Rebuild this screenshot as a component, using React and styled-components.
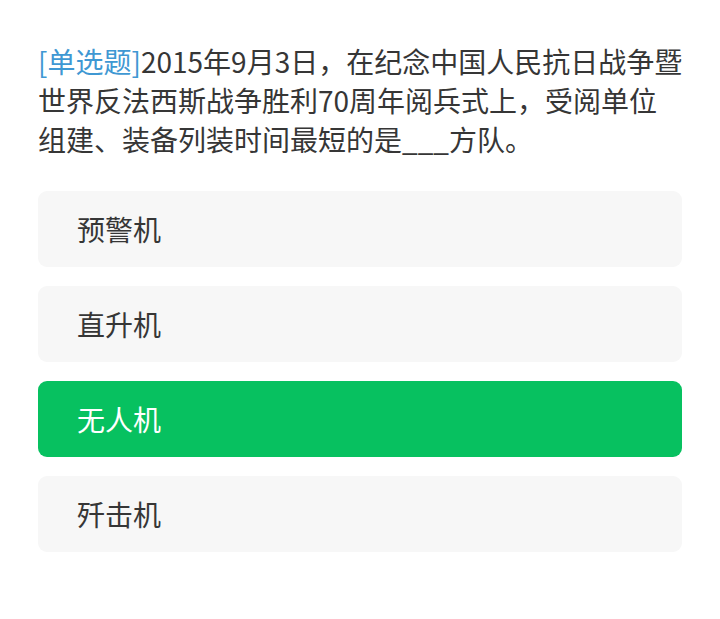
import React from 'react';
import styled, { createGlobalStyle } from 'styled-components';

const GlobalStyle = createGlobalStyle`
  html, body {
    margin: 0;
    padding: 0;
    background: #ffffff;
  }
  body {
    font-family: "Noto Sans CJK SC", "Noto Sans", sans-serif;
  }
`;

const Page = styled.div`
  padding: 42px 38px 40px;
`;

const Question = styled.div`
  font-size: 28px;
  line-height: 39px;
  color: #363636;
  margin-right: -12px;
`;

const Tag = styled.span`
  color: #3f98d3;
`;

const Options = styled.div`
  display: flex;
  flex-direction: column;
  gap: 19px;
  margin-top: 32px;
`;

const Option = styled.div`
  height: 76px;
  display: flex;
  align-items: center;
  padding: 0 39px;
  border-radius: 9px;
  font-size: 28px;
  background: ${(p) => (p.$selected ? '#07c160' : '#f7f7f7')};
  color: ${(p) => (p.$selected ? '#ffffff' : '#363636')};
`;

const options = ['预警机', '直升机', '无人机', '歼击机'];

const App = () => {
  return (
    <Page>
      <GlobalStyle />
      <Question>
        <Tag>[单选题]</Tag>2015年9月3日，在纪念中国人民抗日战争暨
        <br />
        世界反法西斯战争胜利70周年阅兵式上，受阅单位
        <br />
        组建、装备列装时间最短的是___方队。
      </Question>
      <Options>
        {options.map((o) => (
          <Option key={o} $selected={o === '无人机'}>
            {o}
          </Option>
        ))}
      </Options>
    </Page>
  );
};

export default App;
